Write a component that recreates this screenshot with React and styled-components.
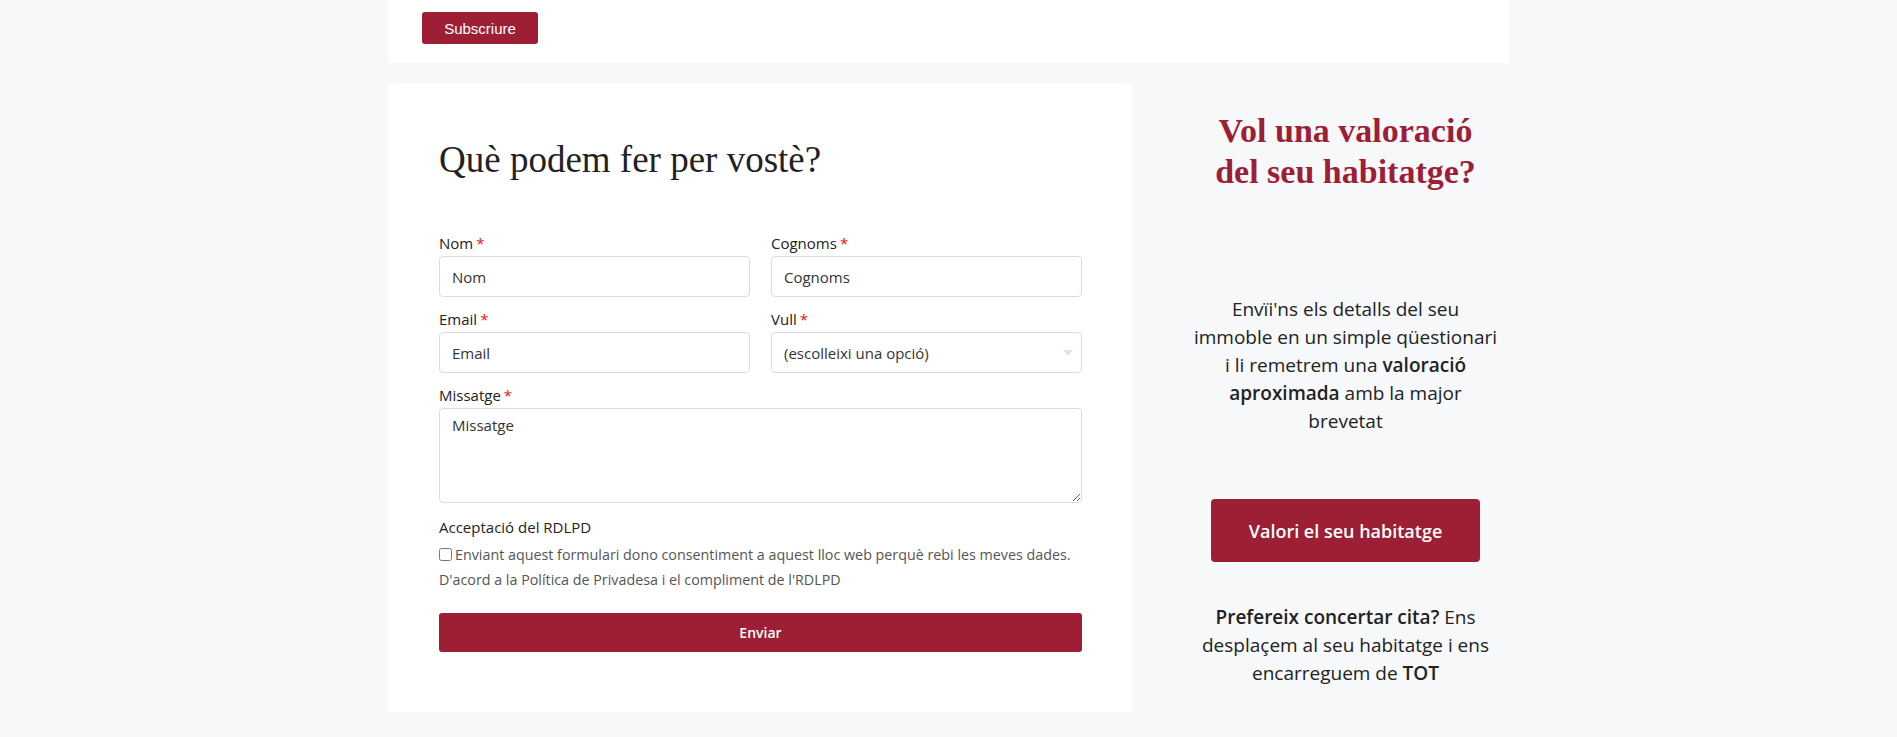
import React from 'react'
import styled, { createGlobalStyle } from 'styled-components'

const GlobalStyle = createGlobalStyle`
  * { box-sizing: border-box; }
  body {
    margin: 0;
    background: #f7f8fa;
    font-family: "Open Sans", "Liberation Sans", sans-serif;
    color: #222;
  }
`

const Page = styled.div`
  width: 1121px;
  margin: 0 auto;
`

const TopBar = styled.div`
  background: #fff;
  height: 63px;
  padding: 12px 0 0 34px;
`

const SmallButton = styled.button`
  background: #9c1f35;
  color: #fff;
  border: none;
  border-radius: 3px;
  width: 116px;
  height: 32px;
  font-family: "Liberation Sans", Arial, sans-serif;
  font-size: 15px;
`

const Row = styled.div`
  display: grid;
  grid-template-columns: 744px 1fr;
  margin-top: 20px;
`

const Card = styled.div`
  background: #fff;
  padding: 54px 50px 60px 51px;
`

const Heading = styled.h2`
  margin: 0 0 49px;
  font-family: "Liberation Serif", "Times New Roman", serif;
  font-weight: 400;
  font-size: 37px;
  line-height: 46px;
  color: #222;
`

const Grid = styled.div`
  display: grid;
  grid-template-columns: 1fr 1fr;
  column-gap: 21px;
  row-gap: 11px;
`

const Field = styled.div`
  display: flex;
  flex-direction: column;
  grid-column: ${p => (p.$wide ? '1 / -1' : 'auto')};
`

const Label = styled.label`
  font-size: 15px;
  line-height: 22px;
  color: #222;
  margin-bottom: 2px;
`

const Req = styled.span`
  color: #e8141d;
  margin-left: 3px;
`

const Input = styled.input`
  height: 41px;
  border: 1px solid #dcdcdc;
  border-radius: 4px;
  padding: 0 12px;
  font-family: "Open Sans", sans-serif;
  font-size: 15px;
  color: #333;
  &::placeholder { color: #333; }
`

const SelectBox = styled.div`
  position: relative;
  height: 41px;
  border: 1px solid #dcdcdc;
  border-radius: 4px;
  padding: 0 12px;
  display: flex;
  align-items: center;
  font-size: 15px;
  color: #333;
`

const Caret = styled.span`
  position: absolute;
  right: 8px;
  top: 17px;
  width: 0;
  height: 0;
  border-left: 5px solid transparent;
  border-right: 5px solid transparent;
  border-top: 6px solid #e2e2e2;
`

const TextArea = styled.textarea`
  height: 95px;
  border: 1px solid #dcdcdc;
  border-radius: 4px;
  padding: 6px 12px;
  font-family: "Open Sans", sans-serif;
  font-size: 15px;
  color: #333;
  resize: vertical;
  &::placeholder { color: #333; }
`

const Consent = styled.div`
  margin-top: 13px;
`

const ConsentText = styled.p`
  margin: 4px 0 0;
  font-size: 14.3px;
  line-height: 25px;
  color: #555;
  white-space: nowrap;
  input { margin: 0 3px 0 0; vertical-align: -1px; }
`

const SubmitButton = styled.button`
  width: 100%;
  margin-top: 21px;
  height: 39px;
  background: #9c1f35;
  color: #fff;
  border: none;
  border-radius: 3px;
  font-family: "Open Sans", sans-serif;
  font-weight: 600;
  font-size: 14px;
`

const Side = styled.aside`
  padding: 27px 0 0 50px;
  display: flex;
  flex-direction: column;
  align-items: center;
  text-align: center;
`

const SideTitle = styled.h3`
  margin: 0;
  font-family: "Liberation Serif", "Times New Roman", serif;
  font-weight: 700;
  font-size: 34px;
  line-height: 41px;
  color: #9c1f35;
`

const SideText = styled.p`
  margin: ${p => p.$top}px 0 0;
  font-size: 19px;
  line-height: 28px;
  color: #222;
  b { font-weight: 600; }
`

const BigButton = styled.button`
  margin-top: 64px;
  height: 63px;
  width: 269px;
  background: #9c1f35;
  color: #fff;
  border: none;
  border-radius: 4px;
  font-family: "Open Sans", sans-serif;
  font-weight: 600;
  font-size: 18px;
`

export default function App() {
  return (
    <>
      <GlobalStyle />
      <Page>
        <TopBar>
          <SmallButton>Subscriure</SmallButton>
        </TopBar>
        <Row>
          <Card>
            <Heading>Què podem fer per vostè?</Heading>
            <Grid>
              <Field>
                <Label>Nom<Req>*</Req></Label>
                <Input placeholder="Nom" />
              </Field>
              <Field>
                <Label>Cognoms<Req>*</Req></Label>
                <Input placeholder="Cognoms" />
              </Field>
              <Field>
                <Label>Email<Req>*</Req></Label>
                <Input placeholder="Email" />
              </Field>
              <Field>
                <Label>Vull<Req>*</Req></Label>
                <SelectBox>
                  (escolleixi una opció)
                  <Caret />
                </SelectBox>
              </Field>
              <Field $wide>
                <Label>Missatge<Req>*</Req></Label>
                <TextArea placeholder="Missatge" />
              </Field>
            </Grid>
            <Consent>
              <Label>Acceptació del RDLPD</Label>
              <ConsentText>
                <input type="checkbox" />
                Enviant aquest formulari dono consentiment a aquest lloc web perquè rebi les meves dades.
                <br />
                D'acord a la Política de Privadesa i el compliment de l'RDLPD
              </ConsentText>
            </Consent>
            <SubmitButton>Enviar</SubmitButton>
          </Card>
          <Side>
            <SideTitle>
              Vol una valoració
              <br />
              del seu habitatge?
            </SideTitle>
            <SideText $top={103}>
              Envïi'ns els detalls del seu
              <br />
              immoble en un simple qüestionari
              <br />
              i li remetrem una <b>valoració</b>
              <br />
              <b>aproximada</b> amb la major
              <br />
              brevetat
            </SideText>
            <BigButton>Valori el seu habitatge</BigButton>
            <SideText $top={41}>
              <b>Prefereix concertar cita?</b> Ens
              <br />
              desplaçem al seu habitatge i ens
              <br />
              encarreguem de <b>TOT</b>
            </SideText>
          </Side>
        </Row>
      </Page>
    </>
  )
}
